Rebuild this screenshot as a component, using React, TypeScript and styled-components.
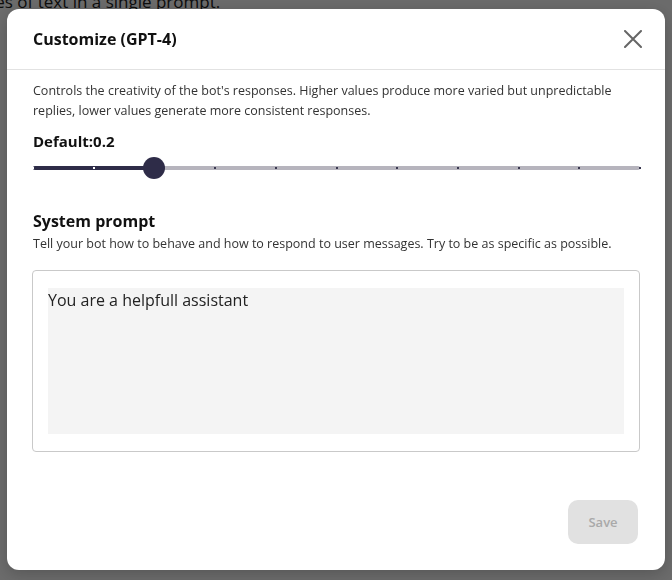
import React, { useState } from "react";
import styled, { createGlobalStyle } from "styled-components";

const GlobalStyle = createGlobalStyle`
	html, body {
		margin: 0;
		padding: 0;
		background: #ffffff;
		font-family: "Open Sans", "Noto Sans", sans-serif;
	}
`;

const Page = styled.div`
	height: 580px;
	overflow: hidden;
	p {
		margin: -10px 0 0 -14px;
		font-size: 17px;
		color: #222;
	}
`;

const Overlay = styled.div`
	position: fixed;
	inset: 0;
	background: rgba(0, 0, 0, 0.58);
	display: flex;
	align-items: flex-start;
	justify-content: center;
	padding-top: 9px;
`;

const Modal = styled.div`
	width: 658px;
	height: 561px;
	background: #fff;
	border-radius: 12px;
	display: flex;
	flex-direction: column;
	box-shadow: 0 4px 16px rgba(0, 0, 0, 0.2);
`;

const Header = styled.div`
	height: 60px;
	display: flex;
	align-items: center;
	justify-content: space-between;
	padding: 0 20px 0 26px;
	border-bottom: 1px solid #e2e2e2;
	h2 {
		margin: 0;
		font-size: 16px;
		font-weight: 700;
		color: #111;
	}
`;

const CloseButton = styled.button`
	background: none;
	border: none;
	padding: 0;
	width: 24px;
	height: 24px;
	cursor: pointer;
	display: flex;
	align-items: center;
	justify-content: center;
`;

const Body = styled.div`
	flex: 1;
	display: flex;
	flex-direction: column;
	padding: 11px 25px 26px 26px;
`;

const Hint = styled.p<{ $gap?: number }>`
	margin: ${(p) => p.$gap ?? 0}px 0 0 0;
	font-size: 12.5px;
	line-height: 20px;
	color: #333;
`;

const Label = styled.h3<{ $size?: number; $gap?: number }>`
	margin: ${(p) => p.$gap ?? 0}px 0 0 0;
	font-size: ${(p) => p.$size ?? 15}px;
	font-weight: 700;
	line-height: 22px;
	color: #111;
`;

const SliderWrap = styled.div`
	position: relative;
	height: 22px;
	margin: 5px 0 0 0;
	width: 607px;
`;

const Track = styled.div`
	position: absolute;
	left: 0;
	right: 0;
	top: 9px;
	height: 4px;
	border-radius: 2px;
	background: #b6b4bd;
`;

const Fill = styled.div`
	position: absolute;
	left: 0;
	top: 9px;
	height: 4px;
	border-radius: 2px;
	background: #2e2c48;
`;

const Tick = styled.span<{ $on: boolean }>`
	position: absolute;
	top: 10px;
	width: 2px;
	height: 2px;
	margin-left: -1px;
	background: ${(p) => (p.$on ? "#ffffff" : "#3a3850")};
`;

const Thumb = styled.span`
	position: absolute;
	top: 0;
	width: 22px;
	height: 22px;
	margin-left: -11px;
	border-radius: 50%;
	background: #2e2c48;
`;

const Section = styled.div`
	margin-top: 31px;
`;

const PromptBox = styled.div`
	margin: 16px 0 0 -1px;
	width: 608px;
	box-sizing: border-box;
	border: 1px solid #c9c9c9;
	border-radius: 4px;
	padding: 17px 15px 17px 15px;
`;

const PromptArea = styled.textarea`
	display: block;
	width: 100%;
	height: 146px;
	box-sizing: border-box;
	border: none;
	outline: none;
	resize: none;
	background: #f4f4f4;
	padding: 1px 0 0 0;
	font-family: "Open Sans", "Noto Sans", sans-serif;
	font-size: 16px;
	line-height: 22px;
	color: #222;
`;

const Footer = styled.div`
	margin-top: auto;
	display: flex;
	justify-content: flex-end;
	padding-right: 2px;
`;

const SaveButton = styled.button`
	width: 70px;
	height: 44px;
	border: none;
	border-radius: 10px;
	background: #e1e1e1;
	color: #a9a9a9;
	font-family: "Open Sans", "Noto Sans", sans-serif;
	font-size: 13px;
	font-weight: 600;
`;

const App: React.FC = () => {
	const [value] = useState(0.2);
	const [prompt, setPrompt] = useState("You are a helpfull assistant");
	const ticks = Array.from({ length: 11 }, (_, i) => i / 10);
	return (
		<>
			<GlobalStyle />
			<Page>
				<p>ges of text in a single prompt.</p>
			</Page>
			<Overlay>
				<Modal>
					<Header>
						<h2>Customize (GPT-4)</h2>
						<CloseButton aria-label="Close">
							<svg width="18" height="18" viewBox="0 0 18 18">
								<path
									d="M1 1 L17 17 M17 1 L1 17"
									stroke="#666"
									strokeWidth="2"
									strokeLinecap="round"
								/>
							</svg>
						</CloseButton>
					</Header>
					<Body>
						<Hint>
							Controls the creativity of the bot's responses. Higher values produce
							more varied but unpredictable replies, lower values generate more
							consistent responses.
						</Hint>
						<Label $gap={9}>Default:{value}</Label>
						<SliderWrap>
							<Track />
							<Fill style={{ width: `${value * 100}%` }} />
							{ticks.map((t) => (
								<Tick key={t} $on={t <= value} style={{ left: `${t * 100}%` }} />
							))}
							<Thumb style={{ left: `${value * 100}%` }} />
						</SliderWrap>
						<Section>
							<Label $size={16}>System prompt</Label>
							<Hint $gap={2}>
								Tell your bot how to behave and how to respond to user messages. Try
								to be as specific as possible.
							</Hint>
						</Section>
						<PromptBox>
							<PromptArea
								value={prompt}
								onChange={(e) => setPrompt(e.target.value)}
							/>
						</PromptBox>
						<Footer>
							<SaveButton disabled>Save</SaveButton>
						</Footer>
					</Body>
				</Modal>
			</Overlay>
		</>
	);
};

export default App;
